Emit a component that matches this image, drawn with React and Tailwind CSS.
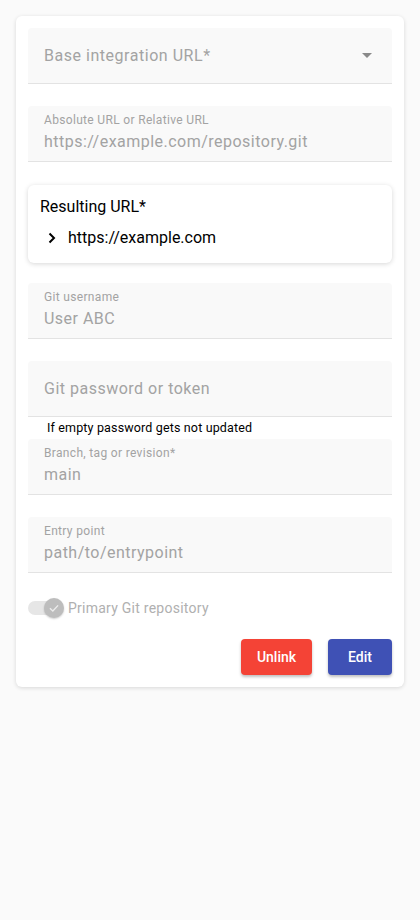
import React from 'react';

const font = { fontFamily: 'Roboto, "Liberation Sans", sans-serif' };

const Field = ({ label, value, className = '' }) => (
  <div className={`h-[56px] rounded-t-[4px] bg-[#f9f9f9] border-b border-[#e3e3e3] px-4 ${className}`}>
    <div className="pt-[7px] text-[12px] leading-[14px] tracking-[0.33px] text-[#a3a3a3]">{label}</div>
    <div className="mt-[5px] text-[16px] leading-[19px] tracking-[0.48px] text-[#a3a3a3]">{value}</div>
  </div>
);

const App = () => {
  return (
    <div className="min-h-[920px] bg-[#fafafa] p-4" style={font}>
      <div className="bg-white rounded-[6px] shadow-[0_1px_4px_rgba(0,0,0,0.14)] p-3 flex flex-col">
        {/* select */}
        <div className="h-[56px] rounded-t-[4px] bg-[#f9f9f9] border-b border-[#e3e3e3] px-4 flex items-center justify-between">
          <span className="text-[16px] text-[#a3a3a3] tracking-[0.53px]">Base integration URL*</span>
          <svg width="10" height="5" viewBox="0 0 10 5" className="mr-[4px]">
            <path d="M0 0 L10 0 L5 5 Z" fill="#8a8a8a" />
          </svg>
        </div>

        <Field className="mt-[22px]" label="Absolute URL or Relative URL" value="https://example.com/repository.git" />

        <div className="mt-[23px] rounded-[6px] bg-white shadow-[0_1px_5px_rgba(0,0,0,0.16)] px-3 pt-[12px] pb-[16px]">
          <div className="text-[16px] leading-[19px] text-black">Resulting URL*</div>
          <div className="mt-[12px] flex items-center">
            <svg width="12" height="12" viewBox="0 0 12 12" className="ml-[6px] mr-[10px]">
              <path d="M3.5 1.5 L8 6 L3.5 10.5" stroke="#000" strokeWidth="2" fill="none" />
            </svg>
            <span className="text-[16px] leading-[19px] text-black">https://example.com</span>
          </div>
        </div>

        <Field className="mt-[20px]" label="Git username" value="User ABC" />

        <div className="mt-[22px] h-[56px] rounded-t-[4px] bg-[#f9f9f9] border-b border-[#e3e3e3] px-4 flex items-center">
          <span className="text-[16px] text-[#a3a3a3] tracking-[0.5px]">Git password or token</span>
        </div>
        <div className="pl-[19px] text-[12.5px] leading-[22px] tracking-[0.15px] text-black">If empty password gets not updated</div>

        <Field label="Branch, tag or revision*" value="main" />

        <Field className="mt-[22px]" label="Entry point" value="path/to/entrypoint" />

        <div className="mt-[24px] flex items-center h-[22px]">
          <div className="relative w-[36px] h-[20px]">
            <div className="absolute left-0 top-[3px] w-[28px] h-[14px] rounded-full bg-[#e6e6e6]" />
            <div className="absolute left-[16px] top-0 w-[20px] h-[20px] rounded-full bg-[#bdbdbd] flex items-center justify-center shadow-[0_1px_2px_rgba(0,0,0,0.2)]">
              <svg width="14" height="14" viewBox="0 0 24 24">
                <path d="M5 12.5 L10 17 L19 7.5" stroke="#ececec" strokeWidth="2.4" fill="none" />
              </svg>
            </div>
          </div>
          <span className="ml-[4px] text-[14px] tracking-[0.25px] text-[#b0b0b0]">Primary Git repository</span>
        </div>

        <div className="mt-[20px] flex justify-end gap-4">
          <button className="h-[36px] w-[71px] rounded-[4px] bg-[#f44336] text-white text-[14px] font-medium shadow-[0_2px_3px_rgba(0,0,0,0.25)]">
            Unlink
          </button>
          <button className="h-[36px] w-[64px] rounded-[4px] bg-[#3f51b5] text-white text-[14px] font-medium shadow-[0_2px_3px_rgba(0,0,0,0.25)]">
            Edit
          </button>
        </div>
      </div>
    </div>
  );
};

export default App;
